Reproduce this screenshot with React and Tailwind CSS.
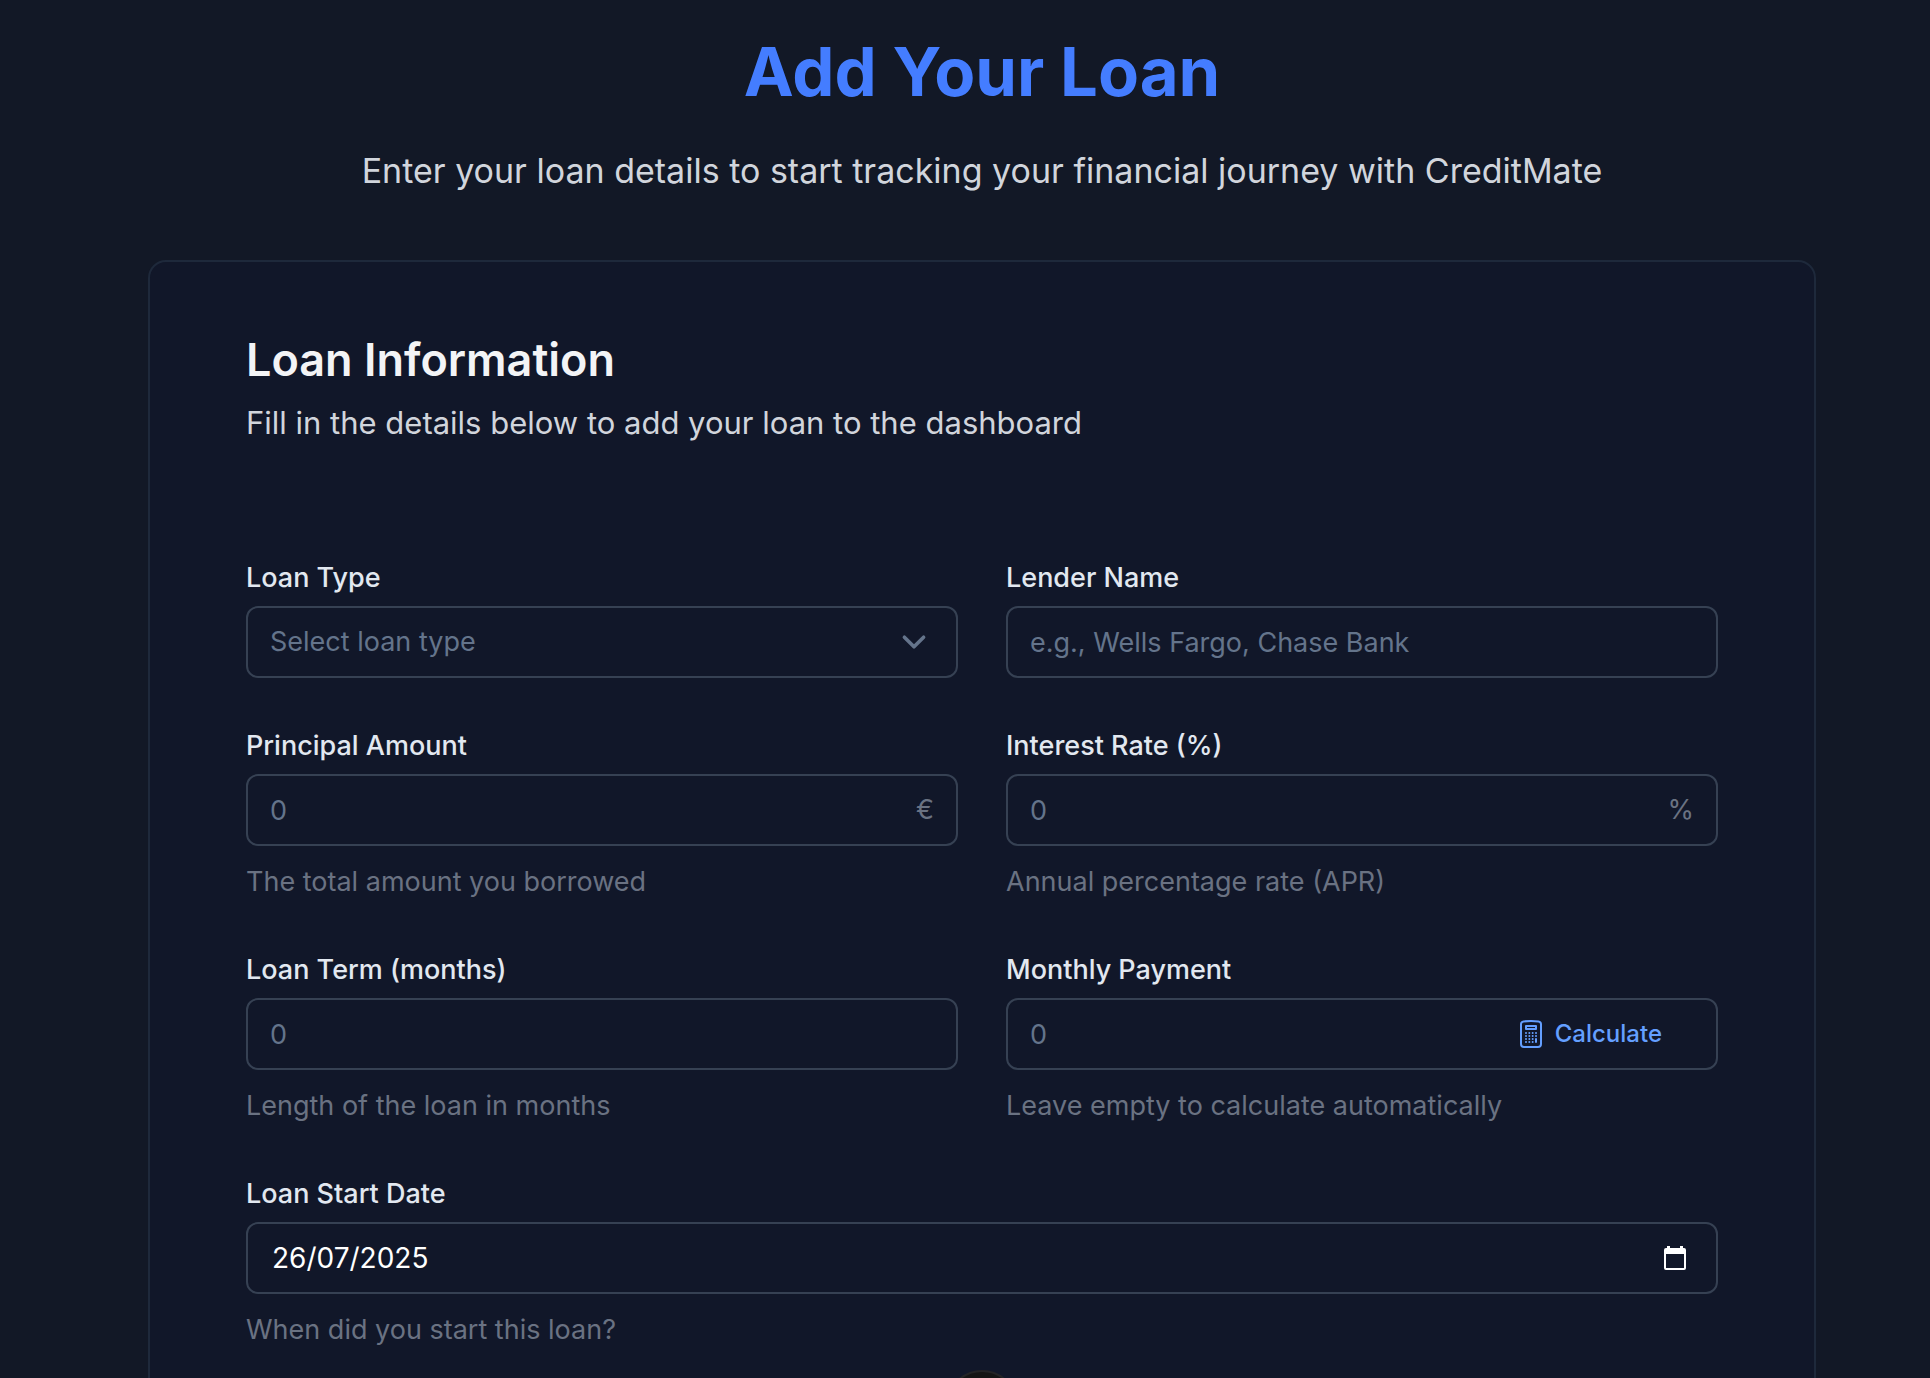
import { HiOutlineCalculator } from "react-icons/hi2";

const control =
  "h-18 w-full rounded-xl border-2 border-[#364153] bg-transparent px-[22px] text-[27px] text-white outline-none placeholder:text-[#64748b] placeholder:opacity-100 focus:border-[#447dff]";

function Field({ id, label, hint, wide, children }) {
  return (
    <div className={wide ? "flex flex-col lg:col-span-2" : "flex flex-col"}>
      <label htmlFor={id} className="text-[27px] leading-10 font-medium text-[#e2e8f0]">
        {label}
      </label>
      <div className="relative mt-2">{children}</div>
      {hint && (
        <p id={`${id}-hint`} className="mt-4 text-[27px] leading-10 text-[#6a7282]">
          {hint}
        </p>
      )}
    </div>
  );
}

function Unit({ children }) {
  return (
    <span className="pointer-events-none absolute inset-y-0 right-6 flex items-center text-[27px] text-[#6a7282]">
      {children}
    </span>
  );
}

function ChevronIcon() {
  return (
    <svg
      viewBox="0 0 20 20"
      fill="none"
      stroke="currentColor"
      strokeWidth="1.5"
      strokeLinecap="round"
      strokeLinejoin="round"
      aria-hidden="true"
      className="pointer-events-none absolute top-3 right-5 size-12 text-[#64748b]"
    >
      <path d="M6 8l4 4 4-4" />
    </svg>
  );
}

function CalendarIcon() {
  return (
    <svg viewBox="0 0 22 24" fill="none" aria-hidden="true" className="h-6 w-[22px]">
      <path d="M3 0h3v3H3zM16 0h3v3h-3z" fill="currentColor" />
      <path
        fillRule="evenodd"
        clipRule="evenodd"
        d="M2 2h18a2 2 0 0 1 2 2v18a2 2 0 0 1-2 2H2a2 2 0 0 1-2-2V4a2 2 0 0 1 2-2Zm0 6v14h18V8H2Z"
        fill="currentColor"
      />
    </svg>
  );
}

export default function App() {
  return (
    <div className="relative h-screen overflow-hidden bg-[#121826] pl-[34px] font-['Inter',sans-serif]">
      <main className="mx-auto w-full max-w-[1668px] pt-8">
        <header className="text-center">
          <h1 className="text-[67px] leading-20 font-bold text-[#447dff]">Add Your Loan</h1>
          <p className="mt-8 text-[34px] leading-[54px] text-[#d1d5dc]">
            Enter your loan details to start tracking your financial journey with CreditMate
          </p>
        </header>

        <section className="mt-[62px] rounded-[18px] border-2 border-[#1e293b] bg-[#111729] px-24 pt-18 pb-24">
          <h2 className="text-[45px] leading-[52px] font-semibold text-[#f3f4f6]">Loan Information</h2>
          <p className="mt-4 text-[31px] leading-[42px] text-[#d1d5dc]">
            Fill in the details below to add your loan to the dashboard
          </p>

          <form className="mt-[114px] grid grid-cols-1 gap-12 lg:grid-cols-2">
            <Field id="loan-type" label="Loan Type">
              <select
                id="loan-type"
                defaultValue=""
                className="h-18 w-full appearance-none rounded-xl border-2 border-[#364153] bg-transparent px-[22px] text-[27px] text-[#64748b] outline-none focus:border-[#447dff]"
              >
                <option value="">Select loan type</option>
              </select>
              <ChevronIcon />
            </Field>

            <Field id="lender" label="Lender Name">
              <input id="lender" type="text" placeholder="e.g., Wells Fargo, Chase Bank" className={control} />
            </Field>

            <Field id="principal" label="Principal Amount" hint="The total amount you borrowed">
              <input id="principal" inputMode="decimal" placeholder="0" aria-describedby="principal-hint" className={control} />
              <Unit>€</Unit>
            </Field>

            <Field id="rate" label="Interest Rate (%)" hint="Annual percentage rate (APR)">
              <input id="rate" inputMode="decimal" placeholder="0" aria-describedby="rate-hint" className={control} />
              <Unit>%</Unit>
            </Field>

            <Field id="term" label="Loan Term (months)" hint="Length of the loan in months">
              <input id="term" inputMode="numeric" placeholder="0" aria-describedby="term-hint" className={control} />
            </Field>

            <Field id="payment" label="Monthly Payment" hint="Leave empty to calculate automatically">
              <input id="payment" inputMode="decimal" placeholder="0" aria-describedby="payment-hint" className={control} />
              <button
                type="button"
                className="absolute inset-y-2 right-6 flex items-center gap-2 rounded-lg px-8 text-2xl font-medium text-[#649fff]"
              >
                <HiOutlineCalculator className="size-8" aria-hidden="true" />
                Calculate
              </button>
            </Field>

            <Field id="start-date" label="Loan Start Date" hint="When did you start this loan?" wide>
              <input
                id="start-date"
                type="text"
                defaultValue="26/07/2025"
                aria-describedby="start-date-hint"
                className="h-18 w-full rounded-xl border-2 border-[#364153] bg-transparent px-6 text-[28px] text-white outline-none focus:border-[#447dff]"
              />
              <button
                type="button"
                aria-label="Open calendar"
                className="absolute inset-y-0 right-6 flex items-center px-2 text-white"
              >
                <CalendarIcon />
              </button>
            </Field>
          </form>
        </section>
      </main>

      <div className="pointer-events-none absolute inset-x-0 -bottom-16 flex justify-center pl-[34px]">
        <button
          type="button"
          aria-label="Developer tools"
          className="pointer-events-auto size-18 rounded-full border-2 border-[#242426] bg-[#151515]"
        />
      </div>
    </div>
  );
}
